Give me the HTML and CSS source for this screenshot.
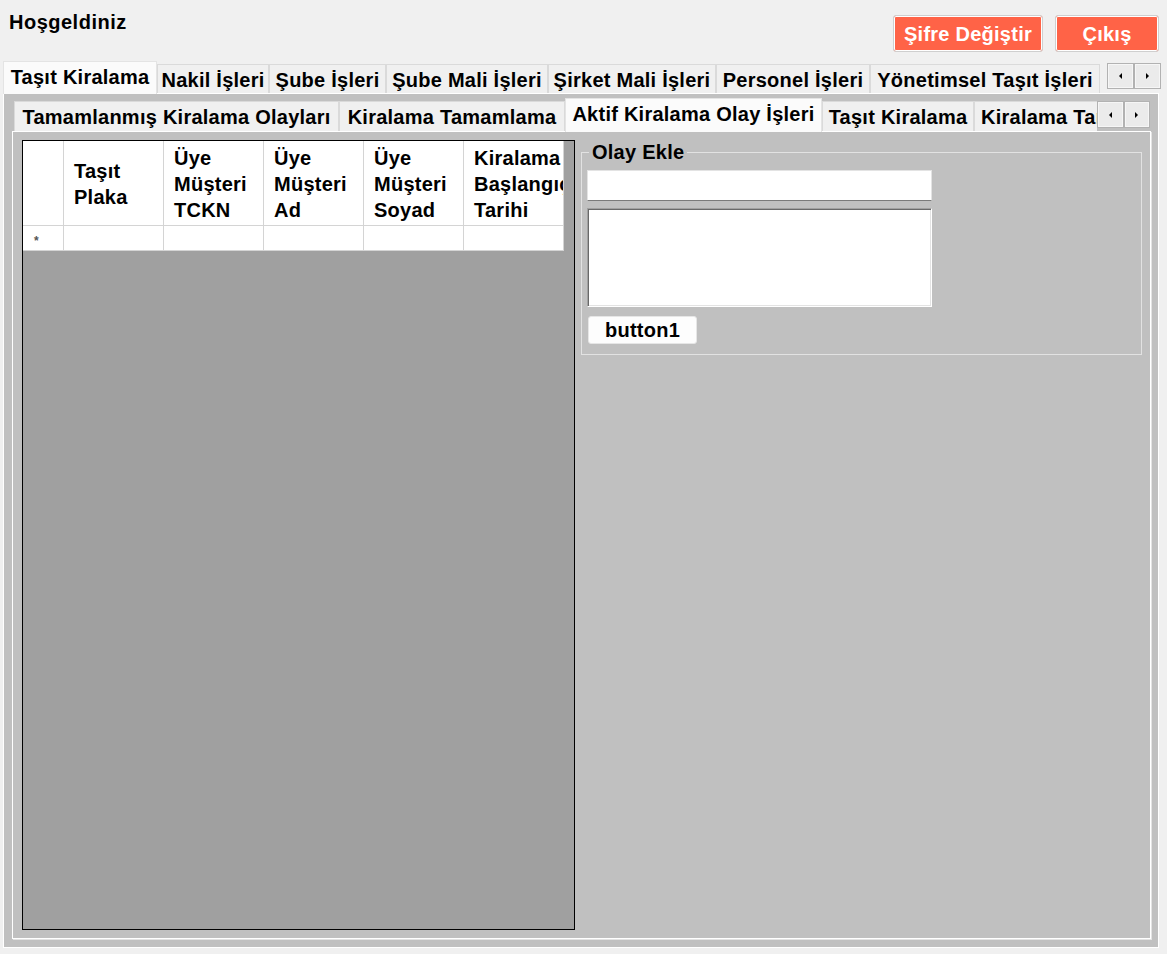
FILE: index.html
```html
<!DOCTYPE html>
<html lang="tr">
<head>
<meta charset="utf-8">
<title>Hoşgeldiniz</title>
<link rel="stylesheet" href="styles.css">
</head>
<body>
<div class="app">
  <header class="topbar">
    <div class="welcome">Hoşgeldiniz</div>
    <div class="actions">
      <button class="btn-red btn-pw">Şifre Değiştir</button>
      <button class="btn-red btn-exit">Çıkış</button>
    </div>
  </header>

  <div class="tabs outer-tabs">
    <div class="tabstrip">
      <div class="tab active ot-1">Taşıt Kiralama</div>
      <div class="tab ot-2">Nakil İşleri</div>
      <div class="tab ot-3">Şube İşleri</div>
      <div class="tab ot-4">Şube Mali İşleri</div>
      <div class="tab ot-5">Şirket Mali İşleri</div>
      <div class="tab ot-6">Personel İşleri</div>
      <div class="tab ot-7">Yönetimsel Taşıt İşleri</div>
    </div>
    <div class="scroller">
      <span class="arrow-btn"><i class="tri tri-left"></i></span>
      <span class="arrow-btn"><i class="tri tri-right"></i></span>
    </div>
  </div>

  <div class="outer-page">
    <div class="tabs inner-tabs">
      <div class="tabstrip clip">
        <div class="tab it-1">Tamamlanmış Kiralama Olayları</div>
        <div class="tab it-2">Kiralama Tamamlama</div>
        <div class="tab active it-3">Aktif Kiralama Olay İşleri</div>
        <div class="tab it-4">Taşıt Kiralama</div>
        <div class="tab it-5">Kiralama Tamamlama</div>
      </div>
      <div class="scroller">
        <span class="arrow-btn"><i class="tri tri-left"></i></span>
        <span class="arrow-btn"><i class="tri tri-right"></i></span>
      </div>
    </div>

    <div class="inner-page">
      <div class="grid">
        <div class="grow head">
          <div class="cell rowhead"></div>
          <div class="cell hcell">Taşıt<br>Plaka</div>
          <div class="cell hcell">Üye<br>Müşteri<br>TCKN</div>
          <div class="cell hcell">Üye<br>Müşteri<br>Ad</div>
          <div class="cell hcell">Üye<br>Müşteri<br>Soyad</div>
          <div class="cell hcell">Kiralama<br>Başlangıç<br>Tarihi</div>
        </div>
        <div class="grow newrow">
          <div class="cell rowhead"><span class="star">*</span></div>
          <div class="cell dcell"></div>
          <div class="cell dcell"></div>
          <div class="cell dcell"></div>
          <div class="cell dcell"></div>
          <div class="cell dcell"></div>
        </div>
      </div>

      <div class="side">
        <fieldset class="group">
          <legend>Olay Ekle</legend>
          <div class="textbox"></div>
          <div class="textarea"></div>
          <button class="btn">button1</button>
        </fieldset>
      </div>
    </div>
  </div>
</div>
</body>
</html>
```

FILE: styles.css
```css
* { box-sizing: border-box; }

html, body { margin: 0; padding: 0; }

body {
  width: 1167px;
  height: 954px;
  overflow: hidden;
  background: #f0f0f0;
  color: #000;
  font-family: "Liberation Sans", Arial, sans-serif;
  font-weight: bold;
  font-size: 20px;
  letter-spacing: 0.25px;
}

/* ---------- top bar ---------- */
.topbar {
  height: 61px;
  display: flex;
  justify-content: space-between;
  align-items: flex-start;
  padding: 0 8px 0 9px;
}

.welcome {
  margin-top: 10px;
  line-height: 24px;
  letter-spacing: 0.5px;
}

.actions {
  display: flex;
  gap: 12px;
  margin-top: 15px;
}

.btn-red {
  height: 37px;
  padding: 0;
  background: #ff6347;
  color: #fff;
  border: 1px solid #cfcfcf;
  border-radius: 3px;
  box-shadow: inset 0 0 0 1px #fff;
  font: inherit;
  letter-spacing: inherit;
  line-height: 24px;
}
.btn-pw { width: 150px; }
.btn-exit { width: 104px; }

/* ---------- tab controls ---------- */
.tabs {
  display: flex;
  position: relative;
  z-index: 1;
}

.tabstrip {
  display: flex;
  flex: 1;
  min-width: 0;
}

.tab {
  flex: none;
  display: flex;
  align-items: center;
  justify-content: center;
  white-space: nowrap;
  line-height: 24px;
  background: #f0f0f0;
  border: 1px solid #dadada;
  border-bottom: none;
}

.tab.active {
  background: #fbfbfb;
  border-color: #e4e4e4;
}

/* outer */
.outer-tabs {
  height: 32px;
  padding: 0 6px 0 3px;
}
.outer-tabs .tabstrip { align-items: flex-end; }
.outer-tabs .tab { height: 29px; padding-top: 1px; }
.outer-tabs .tab.active {
  height: 33px;
  margin-bottom: -1px;
  padding: 0 0 3px;
}
.ot-1 { width: 154px; }
.ot-2 { width: 112px; }
.ot-3 { width: 117px; }
.ot-4 { width: 162px; }
.ot-5 { width: 168px; }
.ot-6 { width: 154px; }
.ot-7 { width: 230px; }

.outer-tabs .scroller {
  margin-top: 2px;
  height: 26px;
  width: 54px;
}

/* inner */
.inner-tabs {
  height: 34px;
  padding: 0 2px;
}
.inner-tabs .tabstrip.clip {
  overflow: hidden;
  align-items: flex-start;
}
.inner-tabs .tab { height: 30px; margin-top: 3px; }
.inner-tabs .tab.active {
  height: 34px;
  margin-top: 0;
  padding-bottom: 4px;
}
.it-1 { width: 325px; }
.it-2 { width: 226px; }
.it-3 { width: 257px; }
.it-4 { width: 152px; }
.it-5 { width: 226px; justify-content: flex-start; padding-left: 6px; }

.inner-tabs .scroller {
  margin-top: 3px;
  height: 27px;
  width: 53px;
}

/* scroll arrows */
.scroller {
  flex: none;
  display: flex;
}
.arrow-btn {
  flex: 1;
  display: flex;
  align-items: center;
  justify-content: center;
  background: #ebebeb;
  border: 1px solid #b2b2b2;
  box-shadow: inset 0 0 0 1px #f6f6f6;
}
.tri {
  width: 0;
  height: 0;
  border-top: 3px solid transparent;
  border-bottom: 3px solid transparent;
}
.tri-left { border-right: 3px solid #000; }
.tri-right { border-left: 3px solid #000; }

/* ---------- pages ---------- */
.outer-page {
  margin: 0 8px 0 3px;
  height: 855px;
  background: #c0c0c0;
  border: 1px solid #fff;
  padding: 4px 6px 0 8px;
}

.inner-page {
  margin: -1px 1px 0 0;
  height: 808px;
  background: #c0c0c0;
  border: 1px solid #fff;
  box-shadow: 1px 1px 0 #e3e3e3;
  padding: 8px 8px 8px 9px;
  display: flex;
}

/* ---------- data grid ---------- */
.grid {
  flex: none;
  width: 553px;
  background: #a0a0a0;
  border: 1px solid #000;
  overflow: hidden;
}

.grow { display: flex; }

.cell {
  flex: none;
  background: #fff;
  border-right: 1px solid #d4d4d4;
  border-bottom: 1px solid #d4d4d4;
}

.rowhead { width: 41px; }
.head .cell { height: 85px; }

.hcell {
  width: 100px;
  display: flex;
  align-items: center;
  padding: 2px 0 0 10px;
  line-height: 26px;
  white-space: nowrap;
  overflow: hidden;
}

.newrow .cell { height: 25px; }
.dcell { width: 100px; }

.newrow .rowhead {
  display: flex;
  align-items: center;
  padding-left: 11px;
}
.star {
  font-size: 12px;
  line-height: 12px;
  color: #555;
  margin-top: 6px;
}

/* ---------- right side ---------- */
.side {
  flex: 1;
  padding-left: 6px;
}

.group {
  margin: 0;
  padding: 0 5px 10px;
  border: 1px solid #e2e2e2;
  min-width: 0;
}

.group legend {
  margin-left: 2px;
  padding: 0 3px;
  line-height: 24px;
}

.textbox {
  margin-top: 6px;
  width: 345px;
  height: 31px;
  background: #fff;
  border: 1px solid #e3e3e3;
  border-bottom: 1px solid #7a7a7a;
}

.textarea {
  margin-top: 7px;
  width: 345px;
  height: 99px;
  background: #fff;
  border: 1px solid;
  border-color: #a0a0a0 #fff #fff #a0a0a0;
  box-shadow: inset 1px 1px 0 #696969, inset -1px -1px 0 #e3e3e3;
}

.btn {
  display: block;
  margin: 9px 0 0 1px;
  width: 109px;
  height: 28px;
  padding: 0;
  background: #fdfdfd;
  border: 1px solid #e6e6e6;
  border-radius: 3px;
  font: inherit;
  letter-spacing: inherit;
  line-height: 24px;
  color: #000;
}
```
